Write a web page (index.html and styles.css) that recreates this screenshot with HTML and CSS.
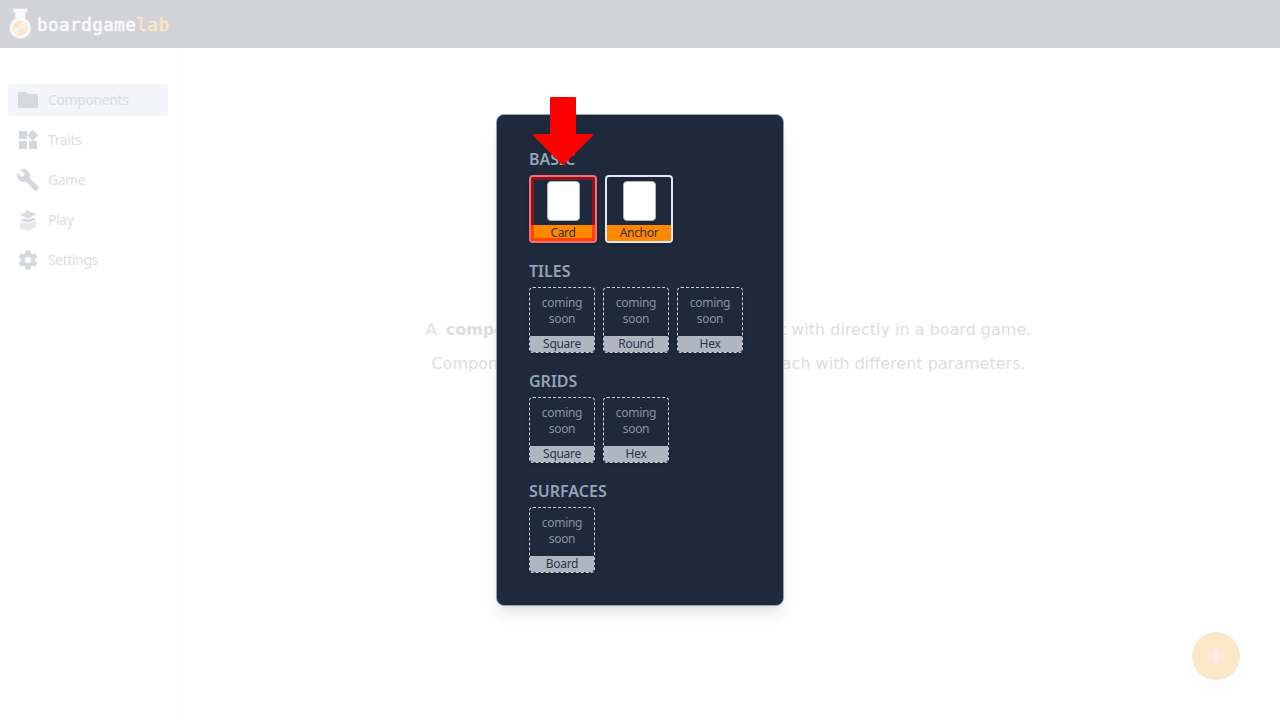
FILE: index.html
```html
<!DOCTYPE html>
<html lang="en">
<head>
<meta charset="utf-8">
<title>boardgamelab</title>
<link rel="stylesheet" href="styles.css">
</head>
<body>
<header class="topbar">
  <svg class="flask" width="25" height="36" viewBox="0 0 25 36">
    <path d="M5.500 3h13.500v3h-2v7a10.200 10.200 0 1 1-9.500 0V6h-2z" fill="#fafafa" stroke="#dfe0e2" stroke-width="2" paint-order="stroke"/>
    <circle cx="12.200" cy="22" r="7.600" fill="#ffe6cb"/>
    <rect x="12.500" y="17" width="5" height="5" rx="1.200" fill="#fafafa" transform="rotate(-12 15 19)"/>
    <rect x="7" y="21.500" width="5" height="5" rx="1.200" fill="#fafafa" transform="rotate(20 9 24)"/>
    <path d="M14.500 19h1M8.500 23h1m1 2h1" stroke="#bfc1c5"/>
  </svg>
  <span class="brand">boardgame<span class="brand-lab">lab</span></span>
</header>
<div class="shell">
  <nav class="sidebar">
    <a class="item active"><svg width="24" height="24" viewBox="0 0 24 24"><path d="M10 4H4c-1.100 0-2 .9-2 2v12c0 1.100.9 2 2 2h16c1.100 0 2-.9 2-2V8c0-1.100-.9-2-2-2h-8z"/></svg><span>Components</span></a>
    <a class="item"><svg width="24" height="24" viewBox="0 0 24 24"><path d="M13 13v8h8v-8zM3 21h8v-8H3zM3 3v8h8V3zm13.660-1.310L11 7.340 16.660 13l5.660-5.660z"/></svg><span>Traits</span></a>
    <a class="item"><svg width="24" height="24" viewBox="0 0 24 24"><path d="m22.700 19-9.100-9.100c.9-2.300.4-5-1.500-6.900-2-2-5-2.400-7.400-1.300L9 6 6 9 1.600 4.700C.4 7.100.9 10.100 2.900 12.100c1.900 1.900 4.600 2.400 6.900 1.500l9.100 9.100c.4.400 1 .4 1.400 0l2.300-2.300c.5-.4.5-1.100.1-1.400z"/></svg><span>Game</span></a>
    <a class="item"><svg width="24" height="24" viewBox="0 0 24 24"><path d="M4 6.800l5.500-2.300L11.500 1.500l2 2.500 6.500 1.800-7.500 4.700zM4 12.300l5-1.800 3.500 1 4-1.500 3.500 1.500-7.500 3.300z"/><path d="M4 13.800l8.500 2 7.500-3V19l-7.500 3.500L4 20.500z" opacity=".7"/><path d="M10 5.500l1.500 1.500 2-2.500M5 15l3 6m0-5l3 5.500m0-4.500l2 4m0-5l3 4m0-5l3 3.500" fill="none" stroke="#fff" stroke-width=".5"/></svg><span>Play</span></a>
    <a class="item"><svg width="24" height="24" viewBox="0 0 24 24"><path d="M19.140 12.940c.04-.3.060-.61.060-.94s-.02-.64-.07-.94l2.030-1.580c.18-.14.23-.41.12-.61l-1.920-3.320c-.12-.22-.37-.29-.59-.22l-2.390.96c-.5-.38-1.030-.7-1.620-.94l-.36-2.540c-.04-.24-.24-.41-.48-.41h-3.840c-.24 0-.43.17-.47.41l-.36 2.540c-.59.24-1.130.57-1.620.94l-2.390-.96c-.22-.08-.47 0-.59.22L2.740 8.870c-.12.21-.08.47.12.61l2.030 1.580c-.05.3-.09.63-.09.94s.02.640.07.940l-2.030 1.580c-.18.14-.23.41-.12.610l1.920 3.320c.12.22.37.29.59.22l2.390-.96c.5.38 1.030.7 1.620.940l.36 2.540c.05.24.24.410.48.410h3.840c.24 0 .44-.17.470-.410l.36-2.540c.59-.24 1.130-.56 1.620-.94l2.390.96c.22.08.47 0 .59-.22l1.920-3.320c.12-.22.070-.47-.12-.610zM12 15.200a3.200 3.200 0 1 1 0-6.400 3.200 3.200 0 0 1 0 6.400z"/></svg><span>Settings</span></a>
  </nav>
  <main class="content">
    <p>A <b>component</b> is an object that you interact with directly in a board game.</p>
    <p>Components <span class="snug">can be added multiple times, each</span> with different parameters.</p>
  </main>
</div>
<button class="fab"><svg width="24" height="24" viewBox="0 0 24 24"><path d="M19 13h-6v6h-2v-6H5v-2h6V5h2v6h6z" fill="#fafafa"/></svg></button>
<section class="dialog">
  <h2>BASIC</h2>
  <div class="row basic">
    <div class="tile ready selected"><div class="preview"><i></i></div><span>Card</span></div>
    <div class="tile ready"><div class="preview"><i></i></div><span>Anchor</span></div>
  </div>
  <h2>TILES</h2>
  <div class="row">
    <div class="tile"><div class="preview">coming<br>soon</div><span>Square</span></div>
    <div class="tile"><div class="preview">coming<br>soon</div><span>Round</span></div>
    <div class="tile"><div class="preview">coming<br>soon</div><span>Hex</span></div>
  </div>
  <h2>GRIDS</h2>
  <div class="row">
    <div class="tile"><div class="preview">coming<br>soon</div><span>Square</span></div>
    <div class="tile"><div class="preview">coming<br>soon</div><span>Hex</span></div>
  </div>
  <h2>SURFACES</h2>
  <div class="row">
    <div class="tile"><div class="preview">coming<br>soon</div><span>Board</span></div>
  </div>
  <svg class="arrow" width="60" height="70" viewBox="0 0 60 70"><path d="M18 1h24v37h17L30 67 1 38h17z" fill="#f00" stroke="#f00" stroke-width="2" stroke-linejoin="round"/></svg>
</section>
</body>
</html>
```

FILE: styles.css
```css
* { box-sizing: border-box; }
body { margin: 0; height: 720px; overflow: hidden; background: #fff; font-family: "Noto Sans", sans-serif; display: flex; flex-direction: column; }
.topbar { height: 48px; background: #d2d3d7; display: flex; align-items: center; padding-left: 8px; flex: none; }
.brand { font: 17.500px/24px "DejaVu Sans Mono", monospace; color: #fafafa; -webkit-text-stroke: .6px currentColor; margin: 2px 0 0 4px; letter-spacing: .5px; }
.brand-lab { color: #ffe3c5; }
.shell { flex: 1; display: flex; }
.sidebar { width: 177px; border-right: 1px solid #f7f7f9; padding: 36px 8px 0; display: flex; flex-direction: column; gap: 8px; }
.item { height: 32px; border-radius: 4px; display: flex; align-items: center; gap: 8px; padding-left: 8px; font-size: 14px; letter-spacing: -.4px; color: #dcdee2; }
.item span { padding-bottom: 2px; }
.item svg { fill: #d5d8dd; }
.active { background: #f4f5fa; }
.content { flex: 1; display: flex; flex-direction: column; align-items: center; justify-content: center; gap: 10px; padding-bottom: 75px; font: 16px/24px "DejaVu Sans", sans-serif; color: #dedede; }
.content p { margin: 0; white-space: nowrap; }
.content b { margin: 0 3px 0 4px; }
.snug { word-spacing: -1px; }
.fab { position: absolute; left: 1192px; top: 632px; width: 48px; height: 48px; border: 0; border-radius: 50%; padding: 0; background: #ffe7cc; display: grid; place-items: center; box-shadow: 0 8px 14px rgba(0,0,0,.02); }
.dialog { position: absolute; left: 496px; top: 114px; width: 288px; height: 492px; padding: 32px; border: 1px solid #94a3b8; border-radius: 8px; background: #1e293b; box-shadow: 0 10px 15px -3px rgba(0,0,0,.1), 0 4px 6px -2px rgba(0,0,0,.05); }
h2 { margin: 0 0 4px; font-size: 16px; line-height: 24px; font-weight: 600; color: #94a3b8; }
.row { display: flex; gap: 8px; margin-bottom: 16px; }
.tile { width: 66px; height: 66px; border: 1px dashed #cbd5e1; border-radius: 4px; display: flex; flex-direction: column; overflow: hidden; text-align: center; font-size: 12px; letter-spacing: -.3px; line-height: 16px; box-shadow: 0 1px 3px rgba(0,0,0,.2); }
.preview { flex: 1; padding-top: 7px; color: #8593a7; }
.tile span { height: 16px; background: #b0b6c1; color: #29344a; }
.ready { width: 68px; height: 68px; border: 2px solid #e2e8f0; position: relative; }
.ready .preview { padding-top: 4px; }
.ready i { display: block; width: 33px; height: 40px; margin: 0 auto; background: #fff; border: 1px solid #b5b5b5; border-radius: 4px; }
.ready span { background: #ff8800; color: #352f31; }
.selected { border-color: #f1707a; }
.selected::after { content: ""; position: absolute; inset: 0; border: 3px solid rgba(255,0,0,.5); }
.arrow { position: absolute; left: 36px; top: -18px; }
```
